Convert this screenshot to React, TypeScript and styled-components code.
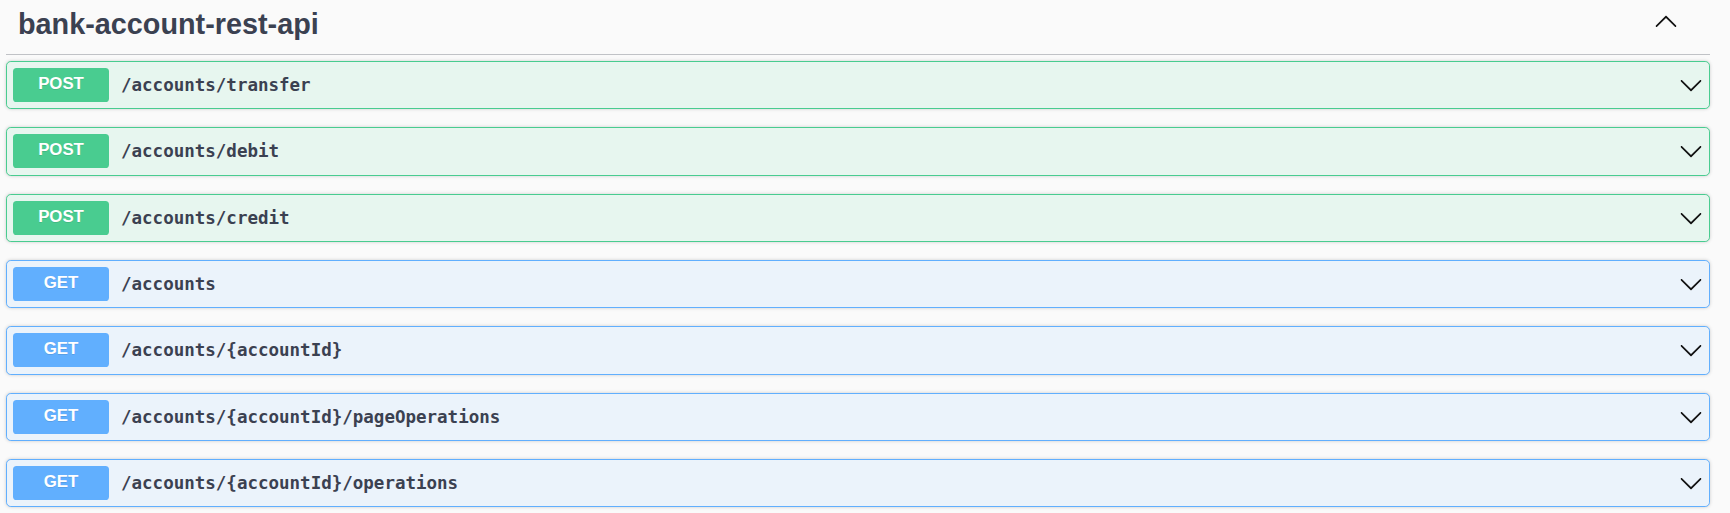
import React from "react";
import styled, { createGlobalStyle } from "styled-components";

const GlobalStyle = createGlobalStyle`
  html, body { margin: 0; padding: 0; background: #fafafa; }
  body { font-family: "Liberation Sans", Arial, sans-serif; color: #3b4151; }
`;

type Method = "post" | "get";

const palette: Record<Method, { main: string; bg: string }> = {
  post: { main: "#49cc90", bg: "#e7f6ef" },
  get: { main: "#61affe", bg: "#ebf3fb" },
};

const Page = styled.div`
  padding: 0 20px 0 6px;
`;

const TagHeader = styled.div`
  display: flex;
  align-items: flex-start;
  justify-content: space-between;
  height: 55px;
  box-sizing: border-box;
  padding: 8px 32px 0 12px;
  border-bottom: 1px solid rgba(59, 65, 81, 0.3);
  margin-bottom: 6px;
`;

const TagTitle = styled.h3`
  margin: 0;
  font-family: "Liberation Sans", Arial, sans-serif;
  font-size: 28.8px;
  line-height: 33px;
  font-weight: 700;
  color: #3b4151;
`;

const ArrowButton = styled.span<{ $up?: boolean }>`
  display: flex;
  width: 24px;
  height: 24px;
  margin-top: ${(p) => (p.$up ? "2px" : "0")};
  transform: ${(p) => (p.$up ? "rotate(180deg)" : "none")};
  svg { width: 24px; height: 24px; fill: #111; }
`;

const Block = styled.div<{ $m: Method }>`
  display: flex;
  align-items: center;
  height: 48.33px;
  box-sizing: border-box;
  padding: 0 6px;
  margin-bottom: 18px;
  background: ${(p) => palette[p.$m].bg};
  border: 1px solid ${(p) => palette[p.$m].main};
  border-radius: 4.8px;
  box-shadow: 0 0 3.6px rgba(0, 0, 0, 0.19);
`;

const Badge = styled.span<{ $m: Method }>`
  display: flex;
  align-items: center;
  justify-content: center;
  width: 96px;
  height: 34px;
  border-radius: 3.6px;
  background: ${(p) => palette[p.$m].main};
  color: #fff;
  font-family: "Liberation Sans", Arial, sans-serif;
  font-weight: 700;
  font-size: 16.8px;
  text-shadow: 0 1.2px 0 rgba(0, 0, 0, 0.1);
  padding-bottom: 2px;
  box-sizing: border-box;
`;

const Path = styled.span`
  flex: 1;
  padding: 0 12px;
  font-family: "DejaVu Sans Mono", "Liberation Mono", monospace;
  font-weight: 700;
  font-size: 17.5px;
  color: #3b4151;
`;

const Arrow = () => (
  <svg viewBox="0 0 20 20" aria-hidden="true">
    <path d="M17.418 6.109c.272-.268.709-.268.979 0s.271.701 0 .969l-7.908 7.83c-.27.268-.707.268-.979 0l-7.908-7.83c-.27-.268-.27-.701 0-.969.271-.268.709-.268.979 0L10 13.25l7.418-7.141z" />
  </svg>
);

const ops: { m: Method; path: string }[] = [
  { m: "post", path: "/accounts/transfer" },
  { m: "post", path: "/accounts/debit" },
  { m: "post", path: "/accounts/credit" },
  { m: "get", path: "/accounts" },
  { m: "get", path: "/accounts/{accountId}" },
  { m: "get", path: "/accounts/{accountId}/pageOperations" },
  { m: "get", path: "/accounts/{accountId}/operations" },
];

export default function App() {
  return (
    <>
      <GlobalStyle />
      <Page>
        <TagHeader>
          <TagTitle>bank-account-rest-api</TagTitle>
          <ArrowButton $up>
            <Arrow />
          </ArrowButton>
        </TagHeader>
        {ops.map((o) => (
          <Block key={o.path} $m={o.m}>
            <Badge $m={o.m}>{o.m.toUpperCase()}</Badge>
            <Path>{o.path}</Path>
            <ArrowButton>
              <Arrow />
            </ArrowButton>
          </Block>
        ))}
      </Page>
    </>
  );
}
